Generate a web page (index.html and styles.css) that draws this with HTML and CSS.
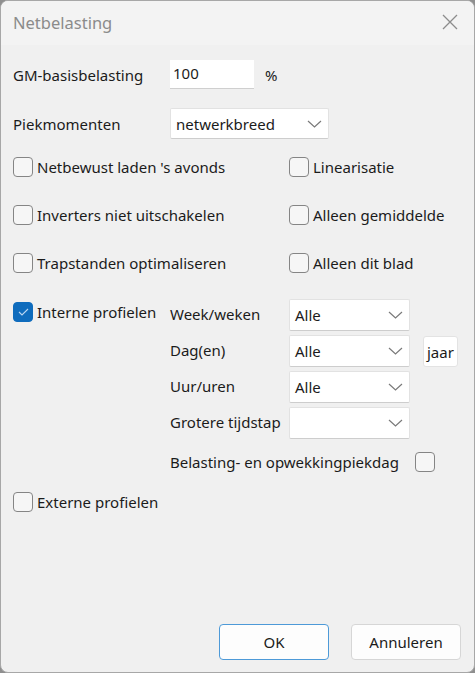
FILE: index.html
```html
<!DOCTYPE html>
<html lang="nl">

<head>
    <meta charset="UTF-8">
    <meta name="viewport" content="width=device-width, initial-scale=1.0">
    <title>Netbelasting</title>
    <link rel="stylesheet" href="styles.css">
</head>

<body>
<div class="dialog">
    <div class="titlebar">
        <span class="title">Netbelasting</span>
        <svg class="close" width="16" height="16" viewBox="0 0 16 16">
            <path d="M1 1 L15 15 M15 1 L1 15" stroke="#8c8c8c" stroke-width="1.3" fill="none" />
        </svg>
    </div>

    <div class="content">
        <div class="row">
            <span class="lbl">GM-basisbelasting</span>
            <span class="textbox">100</span>
            <span class="unit">%</span>
        </div>

        <div class="row row-piek">
            <span class="lbl">Piekmomenten</span>
            <span class="combo combo-wide">netwerkbreed
                <svg class="chev" width="15" height="8" viewBox="0 0 15 8"><path d="M1 1 L7.5 7 L14 1" stroke="#7a7a7a" stroke-width="1.2" fill="none" /></svg>
            </span>
        </div>

        <!-- options in two columns -->
        <div class="options">
            <label class="check"><span class="box"></span>Netbewust laden 's avonds</label>
            <label class="check"><span class="box"></span>Linearisatie</label>
            <label class="check"><span class="box"></span>Inverters niet uitschakelen</label>
            <label class="check"><span class="box"></span>Alleen gemiddelde</label>
            <label class="check"><span class="box"></span>Trapstanden optimaliseren</label>
            <label class="check"><span class="box"></span>Alleen dit blad</label>
        </div>

        <div class="profiles">
            <label class="check check-top"><span class="box checked">
                <svg width="11" height="8" viewBox="0 0 11 8"><path d="M1 4 L4 7 L10 1" stroke="#b9d6f2" stroke-width="1.1" fill="none" /></svg>
            </span>Interne profielen</label>

            <div class="prof-grid">
                <span class="plbl">Week/weken</span>
                <span class="combo">Alle
                    <svg class="chev" width="15" height="8" viewBox="0 0 15 8"><path d="M1 1 L7.5 7 L14 1" stroke="#7a7a7a" stroke-width="1.2" fill="none" /></svg>
                </span>
                <span></span>

                <span class="plbl">Dag(en)</span>
                <span class="combo">Alle
                    <svg class="chev" width="15" height="8" viewBox="0 0 15 8"><path d="M1 1 L7.5 7 L14 1" stroke="#7a7a7a" stroke-width="1.2" fill="none" /></svg>
                </span>
                <span class="smallbtn">jaar</span>

                <span class="plbl">Uur/uren</span>
                <span class="combo">Alle
                    <svg class="chev" width="15" height="8" viewBox="0 0 15 8"><path d="M1 1 L7.5 7 L14 1" stroke="#7a7a7a" stroke-width="1.2" fill="none" /></svg>
                </span>
                <span></span>

                <span class="plbl">Grotere tijdstap</span>
                <span class="combo">
                    <svg class="chev" width="15" height="8" viewBox="0 0 15 8"><path d="M1 1 L7.5 7 L14 1" stroke="#7a7a7a" stroke-width="1.2" fill="none" /></svg>
                </span>
                <span></span>
            </div>
        </div>

        <div class="peak-row">
            <span>Belasting- en opwekkingpiekdag</span>
            <span class="box"></span>
        </div>

        <label class="check check-ext"><span class="box"></span>Externe profielen</label>
    </div>

    <div class="footer">
        <span class="button button-default">OK</span>
        <span class="button">Annuleren</span>
    </div>
</div>
</body>

</html>
```

FILE: styles.css
```css
/* Page + window frame */
body {
    margin: 0;
    padding: 0;
    background-color: #8f8f8f;
    font-family: "Noto Sans", "Open Sans", sans-serif;
    font-size: 15px;
    color: #1b1b1b;
}

.dialog {
    box-sizing: border-box;
    width: 475px;
    height: 673px;
    background-color: #f0f0f0;
    border: 1px solid #a7a7a7;
    border-radius: 8px;
    display: flex;
    flex-direction: column;
    overflow: hidden;
}

/* Title bar */
.titlebar {
    height: 44px;
    display: flex;
    align-items: center;
    justify-content: space-between;
    padding: 0 16px 0 12px;
    background-color: #f3f3f3;
}

.title {
    font-size: 16.5px;
    color: #8b8b8b;
    margin-top: -2px;
}

.close {
    margin-top: -2px;
}

/* Content */
.content {
    padding: 15px 12px 0 12px;
}

.row {
    display: flex;
    align-items: center;
    height: 29px;
}

.row-piek {
    margin-top: 19px;
    height: 31px;
}

.lbl {
    width: 157px;
}

.textbox {
    box-sizing: border-box;
    width: 84px;
    height: 29px;
    background-color: #fff;
    border-bottom: 1px solid #cfcfcf;
    padding: 3px 0 0 3px;
}

.unit {
    margin-left: 11px;
}

.combo {
    box-sizing: border-box;
    position: relative;
    width: 121px;
    height: 32px;
    background-color: #fff;
    border: 1px solid #e2e2e2;
    border-bottom-color: #cdcdcd;
    border-radius: 2px;
    padding: 5px 0 0 5px;
}

.combo-wide {
    width: 159px;
    height: 31px;
}

.chev {
    position: absolute;
    right: 6px;
    top: 11px;
}

/* Checkboxes */
.box {
    box-sizing: border-box;
    display: inline-flex;
    align-items: center;
    justify-content: center;
    width: 20px;
    height: 20px;
    border: 1px solid #858585;
    border-radius: 4px;
    background-color: #f6f6f6;
    margin-right: 4px;
    flex-shrink: 0;
}

.box.checked {
    background-color: #0f6cbd;
    border-color: #0f6cbd;
}

.check {
    display: flex;
    align-items: center;
    height: 20px;
}

.options {
    display: grid;
    grid-template-columns: 276px 1fr;
    row-gap: 28px;
    margin-top: 18px;
}

/* Internal profiles block */
.profiles {
    display: flex;
    margin-top: 26px;
}

.check-top {
    width: 157px;
    margin-top: 3px;
}

.prof-grid {
    display: grid;
    grid-template-columns: 119px 121px auto;
    grid-auto-rows: 32px;
    row-gap: 4px;
    align-items: center;
}

.plbl {
    padding-bottom: 2px;
}

.smallbtn {
    box-sizing: border-box;
    height: 31px;
    margin-left: 13px;
    padding: 5px 3px 0 3px;
    background-color: #fff;
    border: 1px solid #e3e3e3;
    border-radius: 3px;
}

.peak-row {
    display: flex;
    align-items: center;
    margin: 13px 0 0 157px;
    height: 20px;
}

.peak-row span:first-child {
    width: 245px;
}

.check-ext {
    margin-top: 20px;
}

/* Footer buttons */
.footer {
    margin-top: auto;
    display: flex;
    justify-content: flex-end;
    gap: 22px;
    padding: 0 13px 12px 0;
}

.button {
    box-sizing: border-box;
    width: 110px;
    height: 36px;
    display: flex;
    align-items: center;
    justify-content: center;
    background-color: #fdfdfd;
    border: 1px solid #d6d6d6;
    border-radius: 4px;
}

.button-default {
    border-color: #4d9ad8;
}
```
